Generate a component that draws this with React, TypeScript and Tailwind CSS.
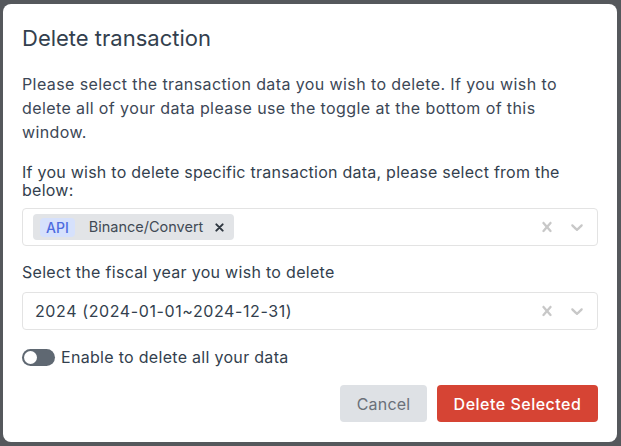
import React from 'react';

const CrossIcon = ({ size = 20 }: { size?: number }) => (
  <svg width={size} height={size} viewBox="0 0 20 20" fill="currentColor">
    <path d="M14.348 14.849c-0.469 0.469-1.229 0.469-1.697 0l-2.651-3.030-2.651 3.029c-0.469 0.469-1.229 0.469-1.697 0-0.469-0.469-0.469-1.229 0-1.697l2.758-3.15-2.759-3.152c-0.469-0.469-0.469-1.228 0-1.697s1.228-0.469 1.697 0l2.652 3.031 2.651-3.031c0.469-0.469 1.228-0.469 1.697 0s0.469 1.229 0 1.697l-2.758 3.152 2.758 3.15c0.469 0.469 0.469 1.229 0 1.698z" />
  </svg>
);

const ChevronIcon = () => (
  <svg width={20} height={20} viewBox="0 0 20 20" fill="currentColor">
    <path d="M4.516 7.548c0.436-0.446 1.043-0.481 1.576 0l3.908 3.747 3.908-3.747c0.533-0.481 1.141-0.446 1.574 0 0.436 0.445 0.408 1.197 0 1.615-0.406 0.418-4.695 4.502-4.695 4.502-0.217 0.223-0.502 0.335-0.787 0.335s-0.57-0.112-0.789-0.335c0 0-4.287-4.084-4.695-4.502s-0.436-1.17 0-1.615z" />
  </svg>
);

function Indicators() {
  return (
    <div className="flex items-center text-[#c8c8c8]">
      <div className="py-2 pl-2 pr-1"><CrossIcon /></div>
      <div className="py-2 pl-[6px] pr-[10px]"><ChevronIcon /></div>
    </div>
  );
}

export default function App() {
  return (
    <div className="h-[446px] w-[621px] overflow-hidden bg-[#55585c] pl-[3px] pt-[4px] font-['Inter',sans-serif] text-[#333f4e]">
      <div className="flex h-[438px] w-[614px] flex-col rounded-lg bg-white px-[19px] pt-5">
        {/* Title */}
        <h2 className="text-[22px] leading-7">Delete transaction</h2>

        <p className="mt-5 text-[16px] leading-6 tracking-[0.4px] text-[#3c4756]">
          Please select the transaction data you wish to delete. If you wish to delete all of your data please use the toggle at the bottom of this window.
        </p>

        <label className="mt-[19px] block text-[16px] leading-[18px] tracking-[0.25px]">
          If you wish to delete specific transaction data, please select from the below:
        </label>

        {/* Multi select */}
        <div className="mt-[9px] flex h-[38px] items-center justify-between rounded border border-[#e3e3e3] pl-[10px]">
          <div className="flex h-[26px] items-center rounded-sm bg-[#e2e4e7] pl-[7px] pr-[10px]">
            <span className="flex h-[19px] items-center rounded bg-[#d6e1fc] px-[6px] text-[14px] font-medium text-[#4d6bdf]">API</span>
            <span className="ml-[14px] text-[14.5px] text-[#414a55]">Binance/Convert</span>
            <span className="ml-[12px] text-[#2f3740]">
              <svg width="9" height="9" viewBox="0 0 10 10" stroke="currentColor" strokeWidth="2.2" strokeLinecap="round">
                <path d="M1.5 1.5l7 7M8.5 1.5l-7 7" />
              </svg>
            </span>
          </div>
          <Indicators />
        </div>

        <label className="mt-[16px] block text-[16px] leading-[20px] tracking-[0.3px]">
          Select the fiscal year you wish to delete
        </label>

        {/* Single select */}
        <div className="mt-[10px] flex h-[38px] items-center justify-between rounded border border-[#e3e3e3] pl-3">
          <span className="text-[16px] tracking-[0.6px] text-[#333f4e]">2024 (2024-01-01~2024-12-31)</span>
          <Indicators />
        </div>

        {/* Toggle */}
        <div className="mt-[15px] flex items-center gap-[6px]">
          <div className="flex h-[17px] w-[33px] items-center rounded-full bg-[#5f6872] px-[2px]">
            <div className="h-[13px] w-[13px] rounded-full bg-white" />
          </div>
          <span className="text-[16px] tracking-[0.3px]">Enable to delete all your data</span>
        </div>

        {/* Footer */}
        <div className="mt-auto mb-5 flex justify-end gap-[10px]">
          <button className="h-[37px] w-[87px] rounded bg-[#dee1e5] text-[16px] tracking-[0.2px] text-[#6b7079]">Cancel</button>
          <button className="h-[37px] w-[161px] rounded bg-[#d64434] text-[16px] font-medium tracking-[0.5px] text-white">Delete Selected</button>
        </div>
      </div>
    </div>
  );
}
